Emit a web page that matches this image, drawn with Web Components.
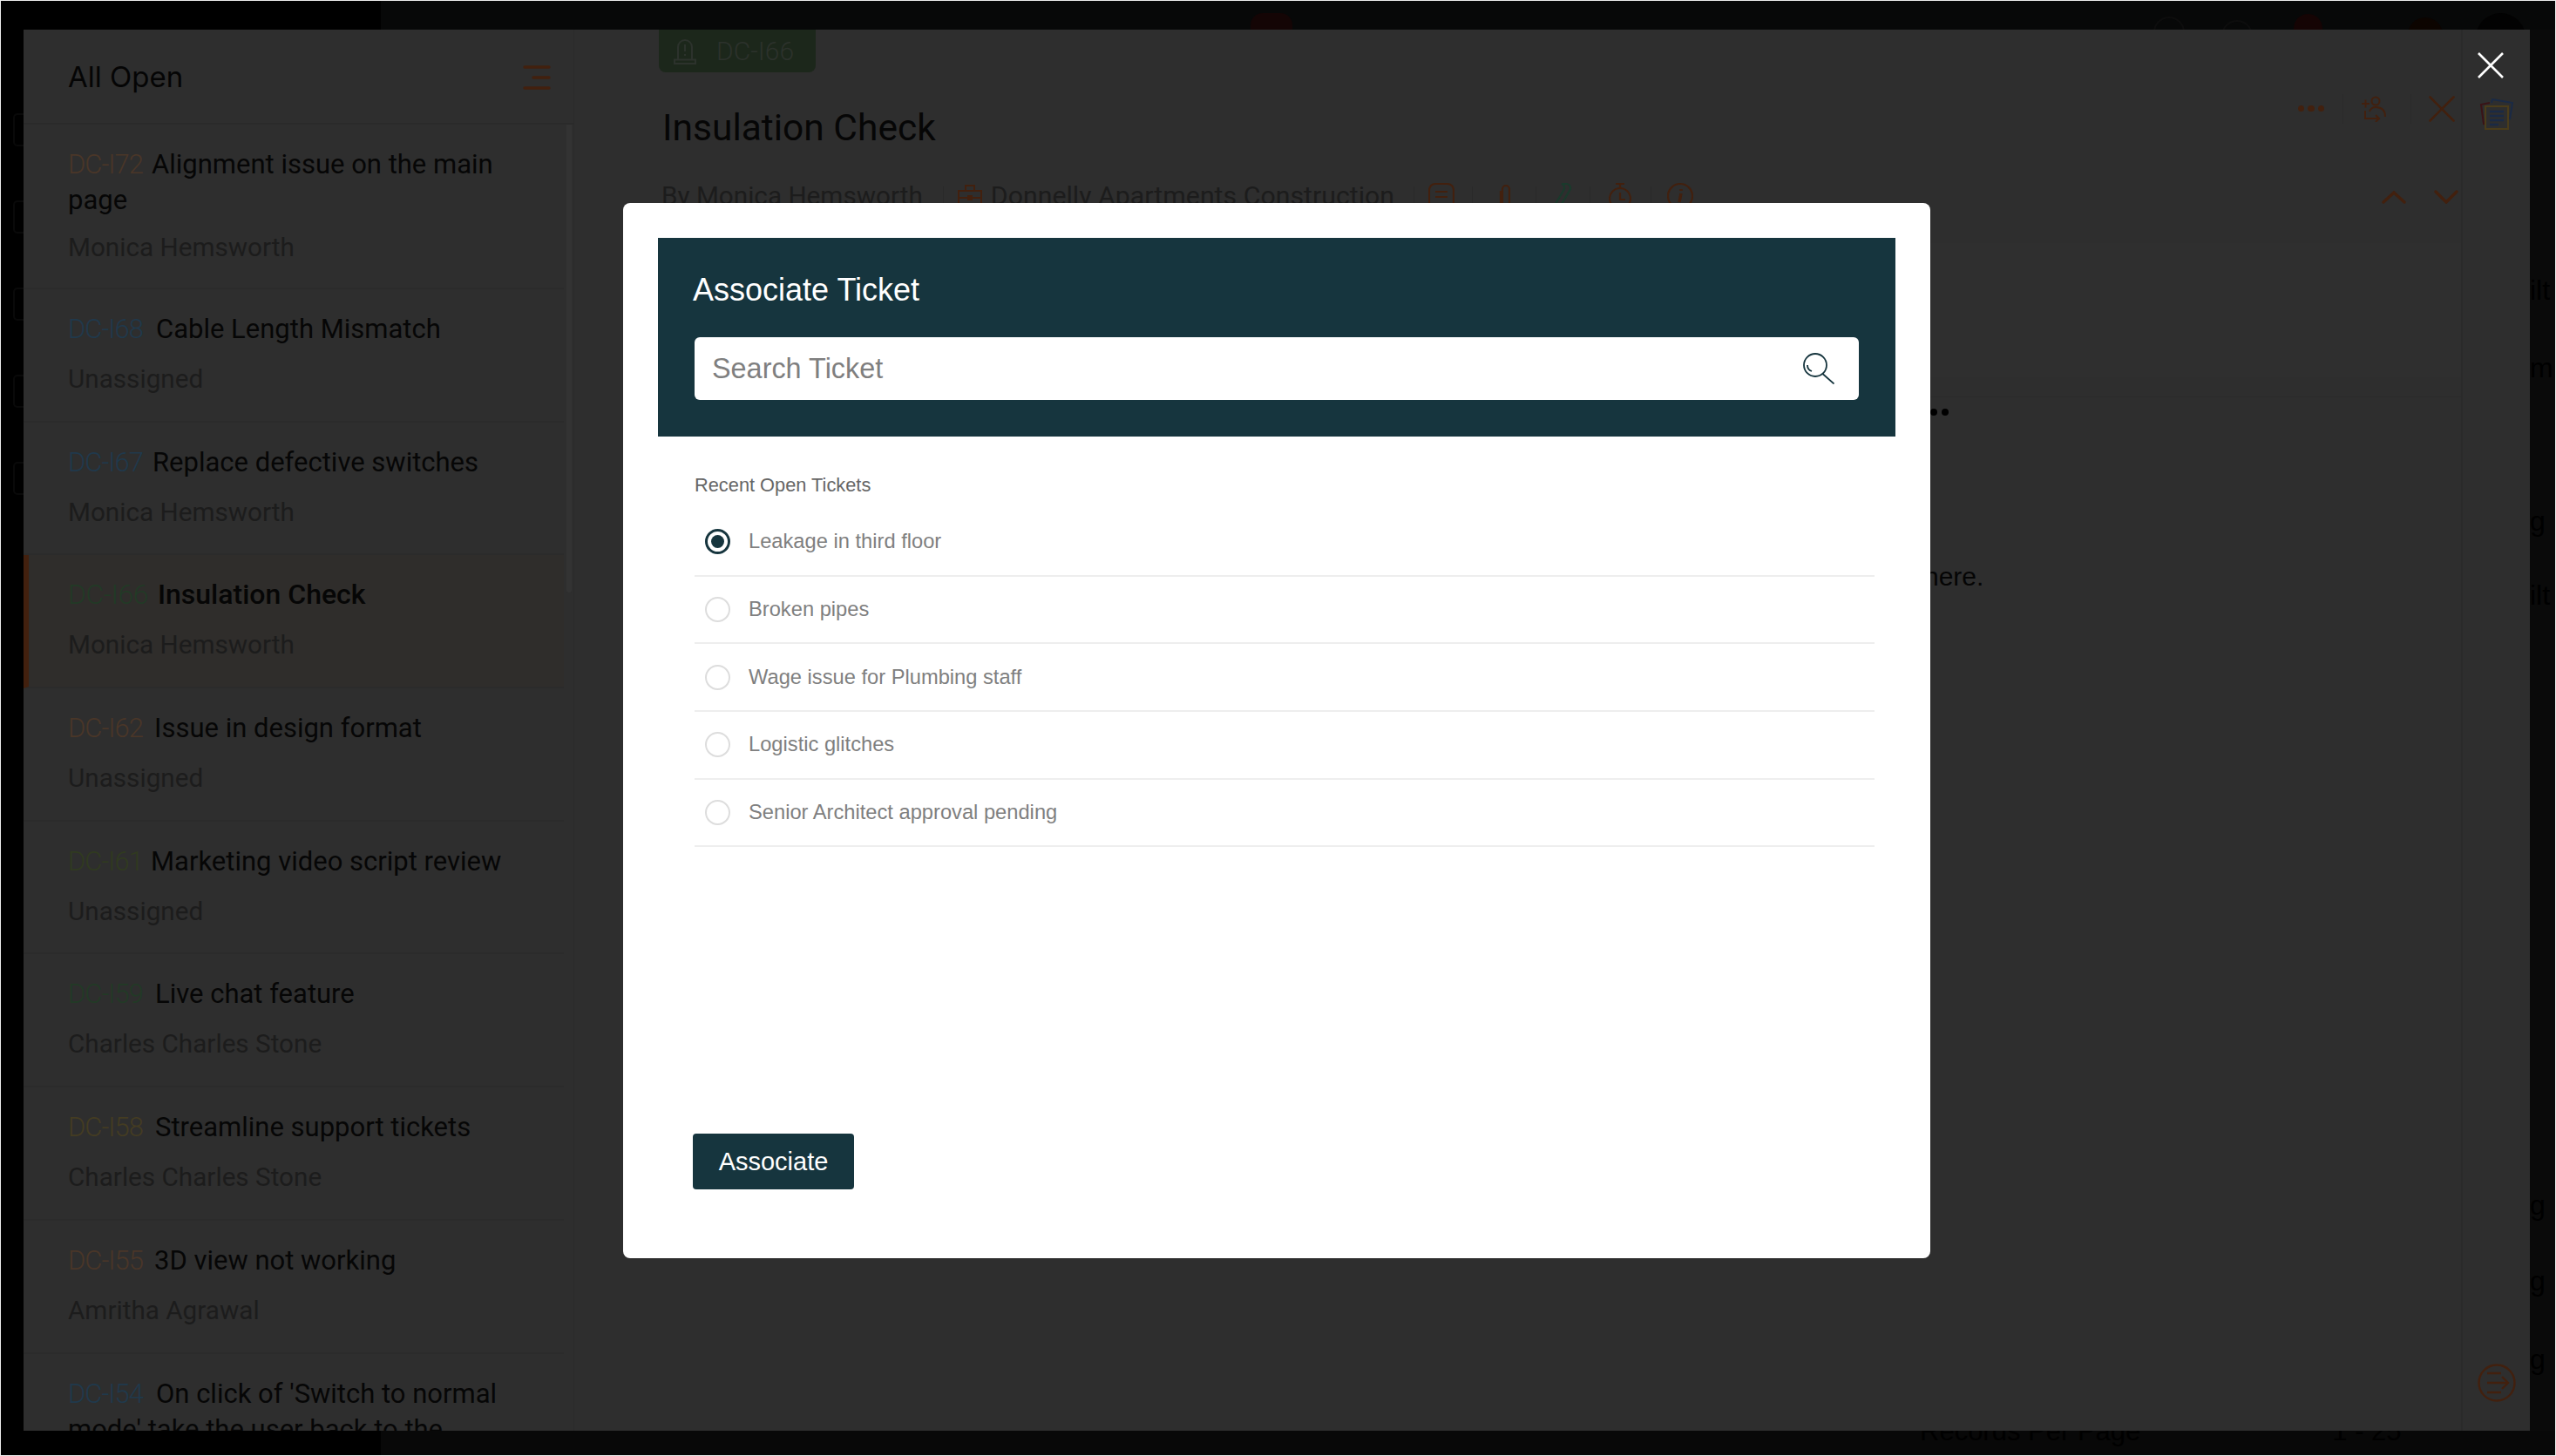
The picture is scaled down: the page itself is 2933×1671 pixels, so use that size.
<!doctype html>
<html>
<head>
<meta charset="utf-8">
<title>Associate Ticket</title>
<style>
  html, body { margin: 0; padding: 0; background: #ececec; }
  body { padding: 1px; width: 2931px; height: 1669px; overflow: hidden; }
</style>
</head>
<body>
<ticket-page>
  <ticket-sidebar slot="sidebar" heading="All Open">
    <ticket-row code="DC-I72" color="#4a3628" who="Monica Hemsworth" gap="-1" tight>Alignment issue on the main<br>page</ticket-row>
    <ticket-row code="DC-I68" color="#20394c" who="Unassigned" gap="4">Cable Length Mismatch</ticket-row>
    <ticket-row code="DC-I67" color="#20394c" who="Monica Hemsworth">Replace defective switches</ticket-row>
    <ticket-row code="DC-I66" color="#223a26" who="Monica Hemsworth" selected>Insulation Check</ticket-row>
    <ticket-row code="DC-I62" color="#4a3628" who="Unassigned" gap="2">Issue in design format</ticket-row>
    <ticket-row code="DC-I61" color="#303a20" who="Unassigned" gap="-2">Marketing video script review</ticket-row>
    <ticket-row code="DC-I59" color="#223a26" who="Charles Charles Stone" gap="3">Live chat feature</ticket-row>
    <ticket-row code="DC-I58" color="#443c22" who="Charles Charles Stone" gap="3">Streamline support tickets</ticket-row>
    <ticket-row code="DC-I55" color="#4a3628" who="Amritha Agrawal" gap="2">3D view not working</ticket-row>
    <ticket-row code="DC-I54" color="#20394c" who="Unassigned" gap="4">On click of 'Switch to normal<br>mode' take the user back to the</ticket-row>
  </ticket-sidebar>
  <ticket-detail slot="detail"></ticket-detail>
  <associate-modal slot="overlay" heading="Associate Ticket" placeholder="Search Ticket" action="Associate">
    <ticket-option checked>Leakage in third floor</ticket-option>
    <ticket-option>Broken pipes</ticket-option>
    <ticket-option>Wage issue for Plumbing staff</ticket-option>
    <ticket-option>Logistic glitches</ticket-option>
    <ticket-option>Senior Architect approval pending</ticket-option>
  </associate-modal>
</ticket-page>

<script>
const UI_FONT = `Roboto, "Liberation Sans", sans-serif`;
const MODAL_FONT = `"Liberation Sans", Arial, sans-serif`;
const DIM_ORANGE = "#42200e";

customElements.define(
  "ticket-page",
  class extends HTMLElement {
    constructor() {
      super().attachShadow({ mode: "open" });
    }

    connectedCallback() {
      this.shadowRoot.innerHTML = /*html*/ `
        <style>
          :host {
            display: grid;
            position: relative;
            grid-template-columns: 26px 2876px 29px;
            grid-template-rows: 33px 1608px 28px;
            width: 2931px;
            height: 1669px;
            overflow: hidden;
            font-family: ${UI_FONT};
            background: #080808;
          }

          .top, .bottom { grid-column: 1 / 4; display: flex; overflow: hidden; }
          .brand { flex: 0 0 436px; background: #000; }
          .top .rest { flex: 1; background: #070808; }
          .bottom { background: #080808; }

          .top .items { display: flex; align-items: flex-start; padding-left: 998px; }
          .blob { flex: none; border-radius: 50%; }

          .rail { background: #000; display: flex; flex-direction: column; align-items: flex-end; padding-top: 96px; gap: 62px; overflow: hidden; }
          .rail i { display: block; width: 14px; height: 34px; margin-right: -6px; border: 2px solid #090909; border-radius: 5px; }

          .panel { display: flex; background: #2e2e2e; overflow: hidden; }

          .edge { background: #0a0a0a; overflow: hidden; font: 32px/40px ${MODAL_FONT}; color: #000; white-space: nowrap; }
          .edge div { height: 40px; }

          .records { flex: 1; display: flex; font: 31px/40px ${MODAL_FONT}; color: #000; padding-left: 1766px; margin-top: -19px; gap: 220px; white-space: nowrap; }

          .close { position: absolute; left: 2842px; top: 59px; width: 30px; height: 30px; }
        </style>
        <div class="top">
          <div class="brand"></div>
          <div class="rest">
            <div class="items">
              <div class="blob" style="width:48px;height:48px;margin-top:14px;border-radius:14px;background:#140505"></div>
              <div class="blob" style="width:32px;height:32px;margin:18px 0 0 988px;border:2px solid #0d0d0d"></div>
              <div class="blob" style="width:32px;height:32px;margin:22px 0 0 42px;border:2px solid #0d0d0d"></div>
              <div class="blob" style="width:33px;height:33px;margin:15px 0 0 47px;background:#150404"></div>
              <div class="blob" style="width:40px;height:40px;margin:19px 0 0 98px;background:#0c0400"></div>
              <div class="blob" style="width:57px;height:57px;margin:14px 0 0 38px;background:#020202"></div>
            </div>
          </div>
        </div>
        <div class="rail"><i></i><i></i><i></i><i></i><i></i></div>
        <div class="panel">
          <slot name="sidebar"></slot>
          <slot name="detail"></slot>
        </div>
        <div class="edge">
          <div style="margin-top:279px">ilt</div>
          <div style="margin-top:49px">m</div>
          <div style="margin-top:136px">g</div>
          <div style="margin-top:45px">ilt</div>
          <div style="margin-top:660px">g</div>
          <div style="margin-top:47px">g</div>
          <div style="margin-top:50px">g</div>
        </div>
        <div class="bottom">
          <div class="brand"></div>
          <div class="records"><span>Records Per Page</span><span>1 - 25</span></div>
        </div>
        <slot name="overlay"></slot>
        <svg class="close" viewBox="0 0 30 30" fill="none" stroke="#fff" stroke-width="2.6">
          <path d="M1 1 29 29M29 1 1 29"/>
        </svg>
      `;
    }
  }
);

customElements.define(
  "ticket-sidebar",
  class extends HTMLElement {
    constructor() {
      super().attachShadow({ mode: "open" });
    }

    connectedCallback() {
      this.shadowRoot.innerHTML = /*html*/ `
        <style>
          :host {
            display: flex;
            flex-direction: column;
            flex: 0 0 632px;
            height: 1608px;
            box-sizing: border-box;
            border-right: 1px solid #2a2a2a;
            overflow: hidden;
          }

          header {
            flex: 0 0 109px;
            box-sizing: border-box;
            display: flex;
            align-items: center;
            justify-content: space-between;
            padding: 0 26px 0 51px;
            border-bottom: 2px solid #2a2a2a;
          }

          h1 { margin: 0; font: 400 33px/44px Inter, ${UI_FONT}; color: #050505; }
          header svg { margin-top: 3px; }

          .body { display: flex; flex: 1; overflow: hidden; }
          .rows { flex: 0 0 620px; }
          .scroll { flex: 1; padding-left: 3px; }
          .scroll i { display: block; width: 6px; height: 537px; background: #333; border-radius: 0 0 3px 3px; }
        </style>
        <header>
          <h1>${this.getAttribute("heading")}</h1>
          <svg width="32" height="28" viewBox="0 0 32 28" fill="none" stroke="${DIM_ORANGE}" stroke-width="3.4" stroke-linecap="round">
            <path d="M2 2H30M12 14H30M2 26H30"/>
          </svg>
        </header>
        <div class="body">
          <div class="rows"><slot></slot></div>
          <div class="scroll"><i></i></div>
        </div>
      `;
    }
  }
);

customElements.define(
  "ticket-row",
  class extends HTMLElement {
    constructor() {
      super().attachShadow({ mode: "open" });
    }

    connectedCallback() {
      const tight = this.hasAttribute("tight");
      const selected = this.hasAttribute("selected");
      const gap = 11 + Number(this.getAttribute("gap") || 0);
      this.shadowRoot.innerHTML = /*html*/ `
        <style>
          :host {
            display: block;
            box-sizing: border-box;
            height: ${tight ? 189 : 152.7}px;
            padding: 25px 20px 0 ${selected ? 45 : 51}px;
            border-bottom: 2px solid #2b2b2b;
            ${selected ? `border-left: 6px solid ${DIM_ORANGE}; background: #2f2d2b;` : ""}
          }

          .title { font: ${selected ? "500 32px" : "400 31px"}/41px ${UI_FONT}; color: #060606; }
          .code { font-weight: 300; letter-spacing: ${selected ? -0.5 : -1}px; color: ${this.getAttribute("color")}; margin-right: ${gap}px; }
          .who { margin-top: ${tight ? 12.5 : 16}px; font: 400 29.7px/41px ${UI_FONT}; color: #1c1c1c; }
        </style>
        <div class="title"><span class="code">${this.getAttribute("code")}</span><slot></slot></div>
        <div class="who">${this.getAttribute("who")}</div>
      `;
    }
  }
);

customElements.define(
  "ticket-detail",
  class extends HTMLElement {
    constructor() {
      super().attachShadow({ mode: "open" });
    }

    connectedCallback() {
      const o = DIM_ORANGE;
      this.shadowRoot.innerHTML = /*html*/ `
        <style>
          :host { display: flex; flex: 1; height: 1608px; overflow: hidden; }

          .main { flex: 0 0 2165px; }
          .head { display: flex; justify-content: space-between; height: 243px; padding: 0 3px 0 97px; box-sizing: border-box; }

          .tag {
            display: inline-flex;
            align-items: center;
            box-sizing: border-box;
            width: 180px;
            height: 49px;
            padding-left: 17px;
            gap: 23px;
            background: #1c271b;
            border-radius: 0 0 8px 8px;
            font: 300 30px/40px ${UI_FONT};
            color: #2c322c;
          }

          h2 { margin: 39px 0 0 4px; font: 400 42.5px/50px ${UI_FONT}; color: #060606; }

          .by { display: flex; align-items: center; margin: 33px 0 0 3px; height: 40px; font: 400 29.7px/40px ${UI_FONT}; color: #1c1c1c; white-space: nowrap; }
          .by b { display: block; width: 1px; height: 22px; background: #292929; }
          .by svg { flex: none; }

          .right { display: flex; flex-direction: column; align-items: flex-end; padding-top: 76px; }
          .actions { display: flex; align-items: center; height: 29px; margin-right: 4px; }
          .actions b { display: block; width: 1px; height: 34px; background: #2a2a2a; }
          .dots { display: flex; gap: 4px; }
          .dots i { display: block; width: 7.5px; height: 7.5px; border-radius: 50%; background: ${o}; }
          .nav { display: flex; gap: 32px; margin-top: 79px; }

          .card { box-sizing: border-box; margin: 2px 0 0 97px; height: 154px; background: #2f2f2f; }
          .note {
            margin: 22px 0 0 97px;
            padding: 13px 0 0 1445px;
            border-top: 1px solid #2b2b2b;
            border-left: 1px solid #2b2b2b;
            font: 30px/40px ${MODAL_FONT};
            color: #050505;
          }
          .note .more { display: flex; gap: 5px; }
          .note .more i { display: block; width: 8px; height: 8px; border-radius: 50%; background: #000; }
          .note p { margin: 165px 0 0 6px; }

          .side {
            flex: 1;
            box-sizing: border-box;
            display: flex;
            flex-direction: column;
            align-items: center;
            padding: 79px 0 33px;
            border-left: 2px solid #2a2a2a;
          }
        </style>
        <div class="main">
          <div class="head">
            <div>
              <div class="tag">
                <svg width="26" height="30" viewBox="0 0 26 30" fill="none" stroke="#2c322c" stroke-width="2">
                  <path d="M5 24V10a8 8 0 0 1 16 0v14M1 24.5H25V29H1ZM13 7v8M13 18v2"/>
                </svg>
                <span>DC-I66</span>
              </div>
              <h2>Insulation Check</h2>
              <div class="by">
                <span>By Monica Hemsworth</span>
                <b style="margin-left:23px"></b>
                <svg style="margin-left:15px" width="30" height="30" viewBox="0 0 30 30" fill="none" stroke="${o}" stroke-width="2"><path d="M2 9H28V28H2ZM10 9V3H20V9M2 17H28"/><path d="M13 15h4v4h-4z"/></svg>
                <span style="margin-left:9px;font-size:30.3px">Donnelly Apartments Construction</span>
                <b style="margin-left:22px"></b>
                <svg style="margin-left:16px" width="30" height="32" viewBox="0 0 30 32" fill="none" stroke="${o}" stroke-width="2.2"><path d="M8 2H22A7 7 0 0 1 29 9V30H8A7 7 0 0 1 1 23V9A7 7 0 0 1 8 2ZM8 11H22M8 17H22"/></svg>
                <b style="margin-left:20px"></b>
                <svg style="margin-left:30px" width="14" height="32" viewBox="0 0 14 32" fill="none" stroke="${o}" stroke-width="2.2"><path d="M4 26V8a4 4 0 0 1 8 0V24a5 5 0 0 1-10 0V10"/></svg>
                <b style="margin-left:28px"></b>
                <svg style="margin-left:11px" width="30" height="32" viewBox="0 0 30 32" fill="none" stroke="#1a3a2c" stroke-width="2.2"><path d="M1 30H8L21 8A5 5 0 0 0 18 2H24A5 5 0 0 1 28 8L14 32"/></svg>
                <b style="margin-left:20px"></b>
                <svg style="margin-left:21px" width="26" height="32" viewBox="0 0 26 32" fill="none" stroke="${o}" stroke-width="2.2"><circle cx="13" cy="19" r="12"/><path d="M13 12V20H19M13 7V2M8 2H18"/></svg>
                <b style="margin-left:22px"></b>
                <svg style="margin-left:18px" width="30" height="32" viewBox="0 0 30 32" fill="none" stroke="${o}" stroke-width="2.2"><circle cx="15" cy="16" r="14"/><path stroke-width="3.4" d="M16 13 14 23M16 8v2"/></svg>
              </div>
            </div>
            <div class="right">
              <div class="actions">
                <div class="dots"><i></i><i></i><i></i></div>
                <b style="margin-left:21px"></b>
                <svg style="margin-left:20px" width="30" height="30" viewBox="0 0 30 30" fill="none" stroke="${o}" stroke-width="2"><circle cx="17" cy="6" r="4.5"/><path d="M28 24C28 17 24 13 17 13 13 13 11 15 10 18M1 9H10M5.500 4.500V13.500M5 17V26H21M17 22 21 26 17 30"/></svg>
                <b style="margin-left:27px"></b>
                <svg style="margin-left:20px" width="30" height="30" viewBox="0 0 30 30" fill="none" stroke="${o}" stroke-width="2.6" stroke-linecap="round"><path d="M1.500 1.500 28.500 28.500M28.500 1.500 1.500 28.500"/></svg>
              </div>
              <div class="nav">
                <svg width="28" height="16" viewBox="0 0 28 16" fill="none" stroke="${o}" stroke-width="3.4" stroke-linecap="round"><path d="M2 14 14 3 26 14"/></svg>
                <svg width="28" height="16" viewBox="0 0 28 16" fill="none" stroke="${o}" stroke-width="3.4" stroke-linecap="round"><path d="M2 2 14 14 26 2"/></svg>
              </div>
            </div>
          </div>
          <div class="card"></div>
          <div class="note">
            <div class="more"><i></i><i></i><i></i></div>
            <p>here.</p>
          </div>
        </div>
        <div class="side">
          <svg width="40" height="36" viewBox="0 0 40 36" fill="none" stroke-width="2">
            <path d="M12 5 2 7 5 29 12 30" stroke="#3a1316"/>
            <path d="M14 5 15 1 38 5 35 24" stroke="#1a2a45"/>
            <rect x="7" y="9" width="26" height="26" stroke="#4a3c1a" fill="#2e2e2e"/>
            <path d="M12 15H28M12 20H28M12 25H28M12 30H22" stroke="#1a2a45" stroke-width="2.4"/>
          </svg>
          <svg style="margin-top:auto" width="44" height="44" viewBox="0 0 44 44" fill="none" stroke="${o}" stroke-width="2.4"><circle cx="22" cy="22" r="20.500"/><path d="M11 11H27M11 22H34M28 15 35 22 28 29M11 33H27"/></svg>
        </div>
      `;
    }
  }
);

customElements.define(
  "associate-modal",
  class extends HTMLElement {
    constructor() {
      super().attachShadow({ mode: "open" });
    }

    connectedCallback() {
      this.shadowRoot.innerHTML = /*html*/ `
        <style>
          :host {
            position: absolute;
            left: 714px;
            top: 232px;
            display: flex;
            flex-direction: column;
            box-sizing: border-box;
            width: 1500px;
            height: 1211px;
            padding: 40px 40px 79px;
            background: #fff;
            border-radius: 8px;
            font-family: ${MODAL_FONT};
          }

          header { height: 228px; box-sizing: border-box; padding: 40px 42px 0 40px; background: #16353e; }
          h1 { margin: 0; font: 400 36px/40px ${MODAL_FONT}; color: #fff; }

          .search {
            display: flex;
            align-items: center;
            justify-content: space-between;
            height: 72px;
            margin: 34px 0 0 2px;
            padding: 0 28px 0 20px;
            background: #fff;
            border-radius: 6px;
            font-size: 32.4px;
            color: #7f7f7f;
          }

          .recent { margin: 43px 24px 0 42px; }
          .label { font-size: 21.8px; line-height: 26px; color: #666; }
          .list { margin-top: 14px; }

          button {
            margin: auto 0 0 40px;
            align-self: flex-start;
            width: 185px;
            height: 64px;
            padding: 0;
            border: 0;
            border-radius: 4px;
            background: #16353e;
            color: #fff;
            font: 400 29px ${MODAL_FONT};
          }
        </style>
        <header>
          <h1>${this.getAttribute("heading")}</h1>
          <div class="search">
            <span>${this.getAttribute("placeholder")}</span>
            <svg width="36" height="36" viewBox="0 0 36 36" fill="none" stroke="#16353e" stroke-width="1.800">
              <circle cx="14" cy="14" r="13"/>
              <path d="M22.500 24 35.500 35.500M5 14c0 4 2 6 5 7"/>
            </svg>
          </div>
        </header>
        <div class="recent">
          <div class="label">Recent Open Tickets</div>
          <div class="list"><slot></slot></div>
        </div>
        <button>${this.getAttribute("action")}</button>
      `;
    }
  }
);

customElements.define(
  "ticket-option",
  class extends HTMLElement {
    constructor() {
      super().attachShadow({ mode: "open" });
    }

    connectedCallback() {
      const checked = this.hasAttribute("checked");
      this.shadowRoot.innerHTML = /*html*/ `
        <style>
          :host {
            display: flex;
            align-items: center;
            box-sizing: border-box;
            height: 77.700px;
            padding: 0 0 0 12px;
            gap: 21px;
            border-bottom: 2px solid #eee;
            font: 23.700px ${MODAL_FONT};
            color: #7f7f7f;
          }

          .radio {
            flex: none;
            box-sizing: border-box;
            width: 29px;
            height: 29px;
            display: grid;
            place-items: center;
            border: ${checked ? "3px solid #16353e" : "2px solid #ddd"};
            border-radius: 50%;
          }

          .radio i { display: ${checked ? "block" : "none"}; width: 15px; height: 15px; border-radius: 50%; background: #16353e; }
        </style>
        <span class="radio"><i></i></span>
        <span><slot></slot></span>
      `;
    }
  }
);
</script>
</body>
</html>
